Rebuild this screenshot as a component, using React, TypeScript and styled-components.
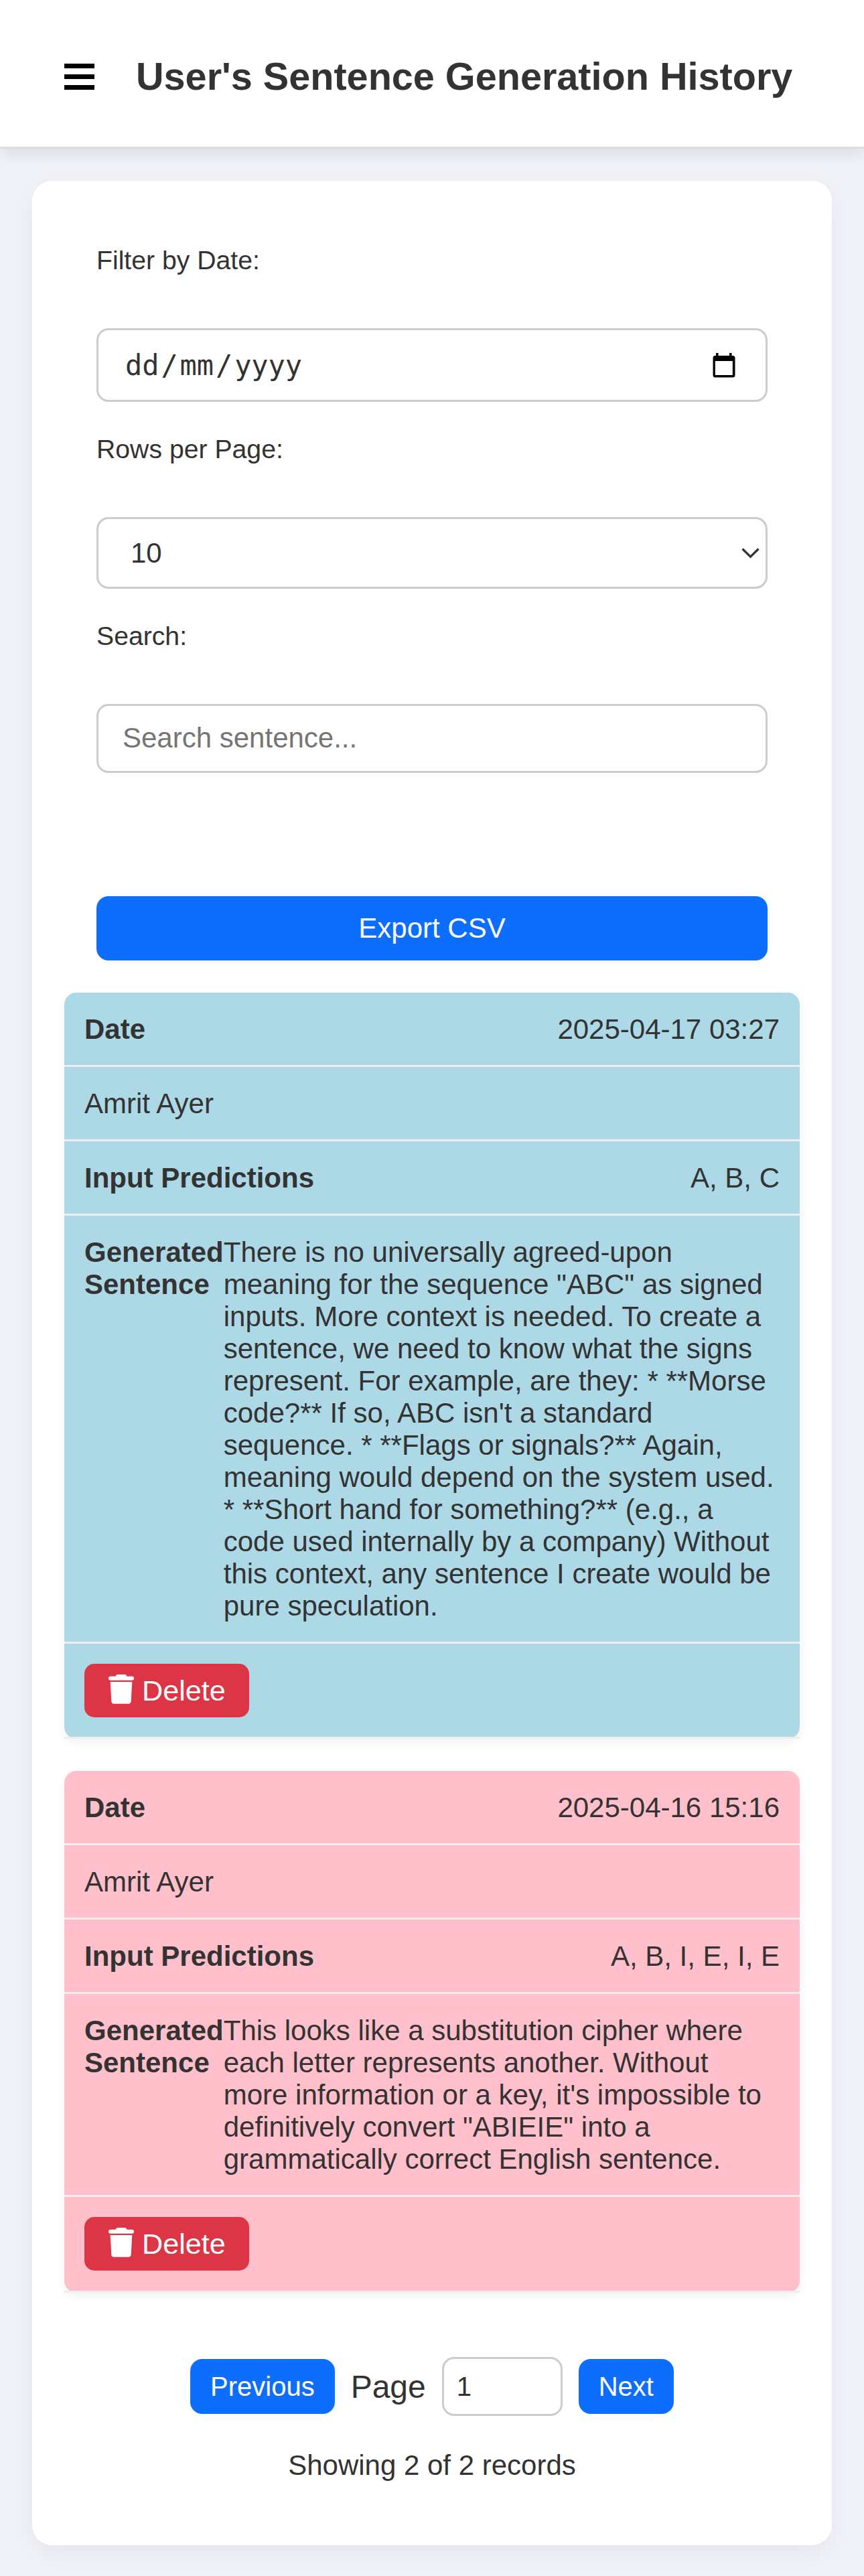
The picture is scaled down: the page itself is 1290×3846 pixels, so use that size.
import React, { useState } from "react";
import styled, { createGlobalStyle } from "styled-components";

const sans = `"Liberation Sans", Arial, Helvetica, sans-serif`;

const GlobalStyle = createGlobalStyle`
  *, *::before, *::after { box-sizing: border-box; }
  body {
    margin: 0;
    background: #f0f2f7;
    color: #333;
    font-family: ${sans};
  }
`;

const Page = styled.div`
  display: flex;
  flex-direction: column;
  min-height: 3846px;
`;

const Header = styled.header`
  display: flex;
  align-items: center;
  height: 222px;
  padding: 0 96px;
  background: #fff;
  border-bottom: 3px solid #ddd;
  box-shadow: 0 6px 24px rgba(0, 0, 0, 0.1);
`;

const MenuButton = styled.button`
  display: flex;
  flex-direction: column;
  gap: 9px;
  width: 45px;
  margin: 10px 62px 0 0;
  padding: 0;
  border: 0;
  background: none;
`;

const MenuBar = styled.span`
  height: 7px;
  background: #000;
`;

const Title = styled.h1`
  margin: 8px 0 0;
  font-size: 57.6px;
  line-height: 66px;
  white-space: nowrap;
`;

const Card = styled.main`
  display: flex;
  flex-direction: column;
  height: 3529.5px;
  margin: 48px 48px 0;
  padding: 96px 48px 0;
  background: #fff;
  border-radius: 30px;
  box-shadow: 0 12px 36px rgba(0, 0, 0, 0.05);
`;

const Filters = styled.section`
  display: flex;
  flex-direction: column;
  padding: 0 48px;
`;

const Field = styled.div<{ $height: number }>`
  display: flex;
  flex-direction: column;
  height: ${(p) => p.$height}px;
`;

const Label = styled.label`
  height: 124px;
  font-size: 39.2px;
  line-height: 45px;
`;

const Control = styled.div<{ $height: number; $pad: string }>`
  display: flex;
  align-items: center;
  justify-content: space-between;
  height: ${(p) => p.$height}px;
  padding: ${(p) => p.$pad};
  border: 3px solid #ccc;
  border-radius: 18px;
  background: #fff;
  font-size: 42px;
  line-height: 48px;
`;

const DateParts = styled.div`
  display: flex;
  padding-top: 2px;
  font-family: "DejaVu Sans Mono", "Liberation Mono", monospace;
  letter-spacing: -0.1px;
`;

const DatePart = styled.span`
  padding: 0 3px;
`;

const SearchInput = styled.input`
  height: 103px;
  width: 100%;
  padding: 0 36px 2px;
  border: 3px solid #ccc;
  border-radius: 18px;
  background: #fff;
  font: 42px ${sans};
  &::placeholder { color: #757575; }
`;

const ExportButton = styled.button`
  height: 96px;
  border: 0;
  border-radius: 18px;
  background: #0d6efd;
  color: #fff;
  font: 42px/48px ${sans};
`;

const Records = styled.section`
  display: flex;
  flex-direction: column;
  gap: 48px;
  margin-top: 48px;
`;

const Record = styled.article<{ $tone: string }>`
  background: ${(p) => p.$tone};
  border-radius: 18px;
  box-shadow: 0 6px 15px rgba(0, 0, 0, 0.05);
`;

const Row = styled.div`
  display: flex;
  justify-content: space-between;
  padding: 31px 30px 29px;
  border-bottom: 3px solid #eee;
  font-size: 42px;
  line-height: 48px;
`;

const RowLabel = styled.strong`
  font-weight: 700;
`;

const ActionRow = styled(Row)`
  height: 142.4px;
  padding: 30px;
`;

const DeleteButton = styled.button`
  display: flex;
  align-items: center;
  gap: 12px;
  height: 79.5px;
  width: 246px;
  padding: 0 36px;
  border: 0;
  border-radius: 15px;
  background: #dc3545;
  color: #fff;
  font: 43.2px/50px ${sans};
  svg {
    flex: none;
    margin-top: -4px;
  }
`;

const Pager = styled.nav`
  display: flex;
  justify-content: center;
  align-items: center;
  gap: 24px;
  margin-top: 96px;
  font-size: 48px;
`;

const PagerButton = styled.button`
  height: 82.6px;
  padding: 0 30px;
  border: 0;
  border-radius: 18px;
  background: #0d6efd;
  color: #fff;
  font: 40px/46px ${sans};
`;

const PagerText = styled.span`
  line-height: 56px;
  padding-top: 2px;
`;

const PageInput = styled.input`
  width: 180px;
  height: 88.6px;
  padding: 0 18px 0 19px;
  border: 3px solid #ccc;
  border-radius: 18px;
  background: #fff;
  color: #333;
  font: 40px ${sans};
`;

const Summary = styled.p`
  margin: 50px 0 0;
  text-align: center;
  font-size: 42px;
  line-height: 48px;
`;

const CalendarIcon = () => (
  <svg width="34" height="37" viewBox="0 0 34 37">
    <path
      fill="#000"
      d="M5 0h3.500v4h16.500V0h3.500v4H30a3.500 3.500 0 0 1 3.500 3.500V33a3.500 3.500 0 0 1-3.500 3.500H4A3.500 3.500 0 0 1 .5 33V7.500A3.500 3.500 0 0 1 4 4h1zM3.800 12v21h26V12z"
      fillRule="evenodd"
    />
  </svg>
);

const ChevronIcon = () => (
  <svg width="27" height="16" viewBox="0 0 27 16">
    <path d="M1.500 1.500 13.500 13.200 25.500 1.500" fill="none" stroke="#333" strokeWidth="3.200" />
  </svg>
);

const TrashIcon = () => (
  <svg width="38" height="44" viewBox="0 0 38 44" fill="#fff">
    <path d="M3 2.800h7.600l.7-1.300C11.700.500 12.600 0 13.600 0h10.800c1 0 1.900.500 2.300 1.500l.7 1.300H35a3 3 0 0 1 0 6H3a3 3 0 0 1 0-6z" />
    <path d="M2.700 10.900h32.600l-1.600 29a4 4 0 0 1-4 3.800H8.300a4 4 0 0 1-4-3.800z" />
  </svg>
);

interface Entry {
  date: string;
  user: string;
  inputs: string;
  sentence: string;
  tone: string;
}

const entries: Entry[] = [
  {
    date: "2025-04-17 03:27",
    user: "Amrit Ayer",
    inputs: "A, B, C",
    sentence:
      "There is no universally agreed-upon meaning for the sequence \"ABC\" as signed inputs. More context is needed. To create a sentence, we need to know what the signs represent. For example, are they: * **Morse code?** If so, ABC isn't a standard sequence. * **Flags or signals?** Again, meaning would depend on the system used. * **Short hand for something?** (e.g., a code used internally by a company) Without this context, any sentence I create would be pure speculation.",
    tone: "#add8e6",
  },
  {
    date: "2025-04-16 15:16",
    user: "Amrit Ayer",
    inputs: "A, B, I, E, I, E",
    sentence:
      "This looks like a substitution cipher where each letter represents another. Without more information or a key, it's impossible to definitively convert \"ABIEIE\" into a grammatically correct English sentence.",
    tone: "#ffc0cb",
  },
];

export default function App() {
  const [query, setQuery] = useState("");
  const [page, setPage] = useState("1");

  return (
    <>
      <GlobalStyle />
      <Page>
        <Header>
          <MenuButton aria-label="Menu">
            <MenuBar />
            <MenuBar />
            <MenuBar />
          </MenuButton>
          <Title>User's Sentence Generation History</Title>
        </Header>
        <Card>
          <Filters>
            <Field $height={282}>
              <Label>Filter by Date:</Label>
              <Control $height={110} $pad="0 45px 0 37px">
                <DateParts>
                  <DatePart>dd</DatePart>/<DatePart>mm</DatePart>/<DatePart>yyyy</DatePart>
                </DateParts>
                <CalendarIcon />
              </Control>
            </Field>
            <Field $height={279}>
              <Label>Rows per Page:</Label>
              <Control $height={107} $pad="0 9px 0 48px">
                <span>10</span>
                <ChevronIcon />
              </Control>
            </Field>
            <Field $height={411}>
              <Label>Search:</Label>
              <SearchInput
                placeholder="Search sentence..."
                value={query}
                onChange={(e) => setQuery(e.target.value)}
              />
            </Field>
            <ExportButton>Export CSV</ExportButton>
          </Filters>
          <Records>
            {entries.map((entry) => (
              <Record key={entry.date} $tone={entry.tone}>
                <Row>
                  <RowLabel>Date</RowLabel>
                  <span>{entry.date}</span>
                </Row>
                <Row>
                  <span>{entry.user}</span>
                </Row>
                <Row>
                  <RowLabel>Input Predictions</RowLabel>
                  <span>{entry.inputs}</span>
                </Row>
                <Row>
                  <RowLabel>Generated Sentence</RowLabel>
                  <span>{entry.sentence}</span>
                </Row>
                <ActionRow>
                  <DeleteButton>
                    <TrashIcon />
                    Delete
                  </DeleteButton>
                </ActionRow>
              </Record>
            ))}
          </Records>
          <Pager>
            <PagerButton>Previous</PagerButton>
            <PagerText>Page</PagerText>
            <PageInput value={page} onChange={(e) => setPage(e.target.value)} />
            <PagerButton>Next</PagerButton>
          </Pager>
          <Summary>Showing 2 of 2 records</Summary>
        </Card>
      </Page>
    </>
  );
}
